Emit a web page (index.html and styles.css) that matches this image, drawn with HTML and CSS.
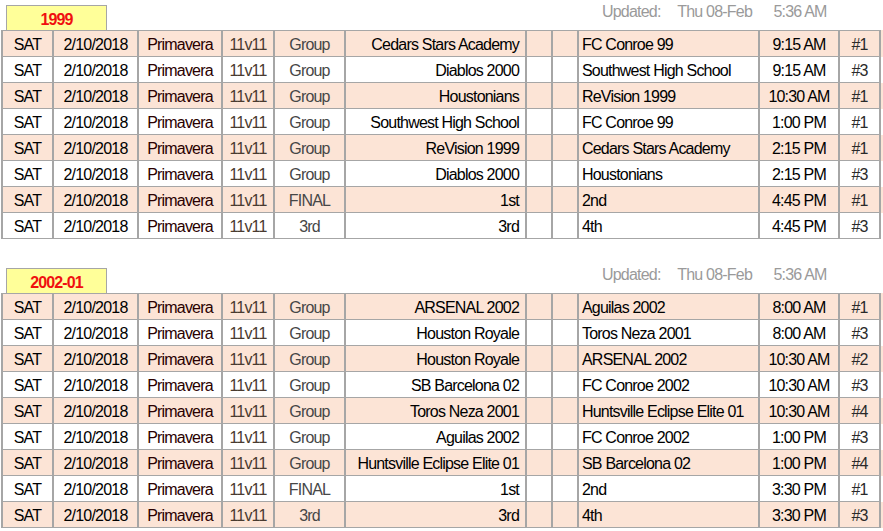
FILE: index.html
```html
<!DOCTYPE html>
<html>
<head>
<meta charset="utf-8">
<title>Schedule</title>
<link rel="stylesheet" href="styles.css">
</head>
<body>
<div class="page">

<section class="section">
  <div class="head">
    <div class="age">1999</div>
    <div class="upd"><span>Updated:</span><span>Thu 08-Feb</span></div>
    <div class="updtime">5:36 AM</div>
  </div>
  <div class="table">
    <div class="row pink"><span class="day">SAT</span><span>2/10/2018</span><span class="league">Primavera</span><span class="fmt">11v11</span><span class="stage">Group</span><span class="home">Cedars Stars Academy</span><span></span><span></span><span class="away">FC Conroe 99</span><span>9:15 AM</span><span class="field">#1</span><span class="fill"></span></div>
    <div class="row"><span class="day">SAT</span><span>2/10/2018</span><span class="league">Primavera</span><span class="fmt">11v11</span><span class="stage">Group</span><span class="home">Diablos 2000</span><span></span><span></span><span class="away">Southwest High School</span><span>9:15 AM</span><span class="field">#3</span><span class="fill"></span></div>
    <div class="row pink"><span class="day">SAT</span><span>2/10/2018</span><span class="league">Primavera</span><span class="fmt">11v11</span><span class="stage">Group</span><span class="home">Houstonians</span><span></span><span></span><span class="away">ReVision 1999</span><span>10:30 AM</span><span class="field">#1</span><span class="fill"></span></div>
    <div class="row"><span class="day">SAT</span><span>2/10/2018</span><span class="league">Primavera</span><span class="fmt">11v11</span><span class="stage">Group</span><span class="home">Southwest High School</span><span></span><span></span><span class="away">FC Conroe 99</span><span>1:00 PM</span><span class="field">#1</span><span class="fill"></span></div>
    <div class="row pink"><span class="day">SAT</span><span>2/10/2018</span><span class="league">Primavera</span><span class="fmt">11v11</span><span class="stage">Group</span><span class="home">ReVision 1999</span><span></span><span></span><span class="away">Cedars Stars Academy</span><span>2:15 PM</span><span class="field">#1</span><span class="fill"></span></div>
    <div class="row"><span class="day">SAT</span><span>2/10/2018</span><span class="league">Primavera</span><span class="fmt">11v11</span><span class="stage">Group</span><span class="home">Diablos 2000</span><span></span><span></span><span class="away">Houstonians</span><span>2:15 PM</span><span class="field">#3</span><span class="fill"></span></div>
    <div class="row pink"><span class="day">SAT</span><span>2/10/2018</span><span class="league">Primavera</span><span class="fmt">11v11</span><span class="stage">FINAL</span><span class="home">1st</span><span></span><span></span><span class="away">2nd</span><span>4:45 PM</span><span class="field">#1</span><span class="fill"></span></div>
    <div class="row"><span class="day">SAT</span><span>2/10/2018</span><span class="league">Primavera</span><span class="fmt">11v11</span><span class="stage">3rd</span><span class="home">3rd</span><span></span><span></span><span class="away">4th</span><span>4:45 PM</span><span class="field">#3</span><span class="fill"></span></div>
  </div>
</section>

<section class="section">
  <div class="head">
    <div class="age">2002-01</div>
    <div class="upd"><span>Updated:</span><span>Thu 08-Feb</span></div>
    <div class="updtime">5:36 AM</div>
  </div>
  <div class="table">
    <div class="row pink"><span class="day">SAT</span><span>2/10/2018</span><span class="league">Primavera</span><span class="fmt">11v11</span><span class="stage">Group</span><span class="home">ARSENAL 2002</span><span></span><span></span><span class="away">Aguilas 2002</span><span>8:00 AM</span><span class="field">#1</span><span class="fill"></span></div>
    <div class="row"><span class="day">SAT</span><span>2/10/2018</span><span class="league">Primavera</span><span class="fmt">11v11</span><span class="stage">Group</span><span class="home">Houston Royale</span><span></span><span></span><span class="away">Toros Neza 2001</span><span>8:00 AM</span><span class="field">#3</span><span class="fill"></span></div>
    <div class="row pink"><span class="day">SAT</span><span>2/10/2018</span><span class="league">Primavera</span><span class="fmt">11v11</span><span class="stage">Group</span><span class="home">Houston Royale</span><span></span><span></span><span class="away">ARSENAL 2002</span><span>10:30 AM</span><span class="field">#2</span><span class="fill"></span></div>
    <div class="row"><span class="day">SAT</span><span>2/10/2018</span><span class="league">Primavera</span><span class="fmt">11v11</span><span class="stage">Group</span><span class="home">SB Barcelona 02</span><span></span><span></span><span class="away">FC Conroe 2002</span><span>10:30 AM</span><span class="field">#3</span><span class="fill"></span></div>
    <div class="row pink"><span class="day">SAT</span><span>2/10/2018</span><span class="league">Primavera</span><span class="fmt">11v11</span><span class="stage">Group</span><span class="home">Toros Neza 2001</span><span></span><span></span><span class="away">Huntsville Eclipse Elite 01</span><span>10:30 AM</span><span class="field">#4</span><span class="fill"></span></div>
    <div class="row"><span class="day">SAT</span><span>2/10/2018</span><span class="league">Primavera</span><span class="fmt">11v11</span><span class="stage">Group</span><span class="home">Aguilas 2002</span><span></span><span></span><span class="away">FC Conroe 2002</span><span>1:00 PM</span><span class="field">#3</span><span class="fill"></span></div>
    <div class="row pink"><span class="day">SAT</span><span>2/10/2018</span><span class="league">Primavera</span><span class="fmt">11v11</span><span class="stage">Group</span><span class="home">Huntsville Eclipse Elite 01</span><span></span><span></span><span class="away">SB Barcelona 02</span><span>1:00 PM</span><span class="field">#4</span><span class="fill"></span></div>
    <div class="row"><span class="day">SAT</span><span>2/10/2018</span><span class="league">Primavera</span><span class="fmt">11v11</span><span class="stage">FINAL</span><span class="home">1st</span><span></span><span></span><span class="away">2nd</span><span>3:30 PM</span><span class="field">#1</span><span class="fill"></span></div>
    <div class="row pink"><span class="day">SAT</span><span>2/10/2018</span><span class="league">Primavera</span><span class="fmt">11v11</span><span class="stage">3rd</span><span class="home">3rd</span><span></span><span></span><span class="away">4th</span><span>3:30 PM</span><span class="field">#3</span><span class="fill"></span></div>
  </div>
</section>

</div>
</body>
</html>
```

FILE: styles.css
```css
html, body {
  margin: 0;
  padding: 0;
  background: #ffffff;
  overflow: hidden;
}

body {
  font-family: "Liberation Sans", Arial, sans-serif;
  font-size: 16px;
  letter-spacing: -0.8px;
  color: #000000;
}

.page {
  padding-left: 1px;
}

.section + .section {
  margin-top: 24px;
}

.head {
  display: grid;
  grid-template-columns: 2px 51px 85px 84px 52px 71px 181px 26px 26px 181px 80px 41px;
  height: 30px;
}

.age {
  grid-column: 2 / 4;
  box-sizing: border-box;
  margin: 5px 0 0 3px;
  width: 101px;
  height: 25px;
  padding-top: 2px;
  line-height: 24px;
  background: #ffff99;
  border: 1px solid #a6a6a6;
  border-bottom: none;
  color: #f01010;
  font-weight: bold;
  font-size: 16px;
  letter-spacing: -0.9px;
  text-align: center;
}

.upd {
  grid-column: 10;
  display: flex;
  justify-content: space-between;
  padding: 3px 8px 0 23px;
  line-height: 18px;
  color: #9a9a9a;
  white-space: nowrap;
}

.updtime {
  grid-column: 11;
  padding-top: 3px;
  line-height: 18px;
  color: #9a9a9a;
  text-align: center;
  white-space: nowrap;
}

.row {
  display: grid;
  grid-template-columns: 53px 85px 84px 52px 71px 181px 26px 26px 181px 80px 41px 1fr;
}

.row > span {
  box-sizing: border-box;
  height: 26px;
  padding-top: 5px;
  border-right: 2px solid #a6a6a6;
  border-bottom: 1px solid #a6a6a6;
  display: flex;
  align-items: flex-start;
  justify-content: center;
  line-height: 18px;
  white-space: nowrap;
  overflow: hidden;
  background: #ffffff;
}

.row:first-child > span {
  height: 27px;
  border-top: 1px solid #a6a6a6;
}

.row > span:first-child {
  border-left: 2px solid #a6a6a6;
}

.row.pink > span {
  background: #fce4d6;
}

.row > span.fill {
  border: none;
}

.league {
  color: #2a0000;
}

.fmt {
  color: #4a3a30;
}

.stage {
  color: #474747;
}

.field {
  color: #2a2a2a;
}

.row > span.home {
  justify-content: flex-end;
  padding-right: 6px;
}

.row > span.away {
  justify-content: flex-start;
  padding-left: 3px;
}
```
